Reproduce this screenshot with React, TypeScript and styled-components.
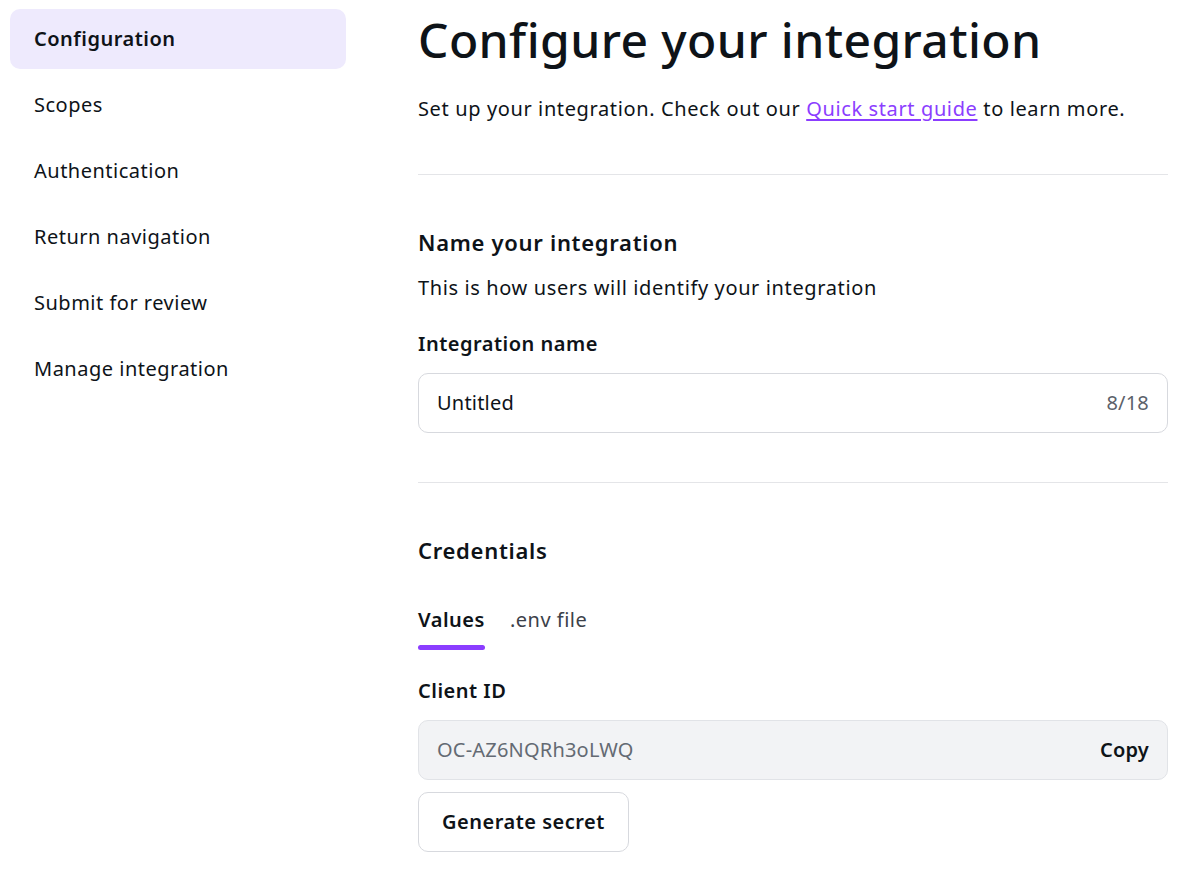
import React, { useState } from 'react';
import styled, { createGlobalStyle } from 'styled-components';

const GlobalStyle = createGlobalStyle`
  html, body {
    margin: 0;
    padding: 0;
    background: #fff;
  }
  body {
    font-family: 'Noto Sans', 'Open Sans', sans-serif;
    color: #0e1318;
    letter-spacing: 0.5px;
  }
  * {
    box-sizing: border-box;
  }
`;

const Page = styled.div`
  display: grid;
  grid-template-columns: 336px minmax(0, 750px);
  column-gap: 72px;
  padding: 9px 20px 0 10px;
  width: 1188px;
`;

const Sidebar = styled.nav`
  display: flex;
  flex-direction: column;
  gap: 6px;
`;

const NavItem = styled.a<{ $active?: boolean }>`
  display: flex;
  align-items: center;
  height: 60px;
  padding: 0 24px 2px;
  border-radius: 10px;
  font-size: 20px;
  font-weight: ${(p) => (p.$active ? 600 : 400)};
  color: #0e1318;
  text-decoration: none;
  background: ${(p) => (p.$active ? '#eeeafd' : 'transparent')};
  cursor: pointer;
`;

const Main = styled.main`
  display: flex;
  flex-direction: column;
  padding-top: 3px;
`;

const Title = styled.h1`
  margin: 0;
  font-size: 48px;
  line-height: 56px;
  font-weight: 500;
  letter-spacing: 0.4px;
`;

const Text = styled.p<{ $top: number }>`
  margin: ${(p) => p.$top}px 0 0;
  font-size: 20px;
  line-height: 28px;
  letter-spacing: 0.62px;
`;

const Link = styled.a`
  color: #8b3dff;
  text-decoration: underline;
  text-underline-offset: 3px;
`;

const Divider = styled.hr<{ $top: number }>`
  margin: ${(p) => p.$top}px 0 0;
  border: none;
  border-top: 1px solid #e4e5e8;
  height: 0;
`;

const Heading = styled.h2<{ $top: number }>`
  margin: ${(p) => p.$top}px 0 0;
  font-size: 22px;
  line-height: 30px;
  font-weight: 600;
  letter-spacing: 0.7px;
`;

const Label = styled.label<{ $top: number }>`
  display: block;
  margin-top: ${(p) => p.$top}px;
  font-size: 20px;
  line-height: 28px;
  font-weight: 600;
`;

const Field = styled.div<{ $readOnly?: boolean }>`
  display: flex;
  align-items: center;
  justify-content: space-between;
  margin-top: 15px;
  height: 60px;
  padding: 0 18px 2px 18px;
  border: 1px solid ${(p) => (p.$readOnly ? '#e1e3e7' : '#d7d9de')};
  border-radius: 10px;
  background: ${(p) => (p.$readOnly ? '#f2f3f5' : '#fff')};
  font-size: 20px;
  letter-spacing: 0.2px;
`;

const FieldValue = styled.span<{ $muted?: boolean }>`
  color: ${(p) => (p.$muted ? '#646a73' : '#0e1318')};
`;

const Counter = styled.span`
  color: #5b616a;
`;

const CopyButton = styled.button`
  border: none;
  background: none;
  padding: 0;
  font-family: inherit;
  font-size: 20px;
  font-weight: 600;
  letter-spacing: inherit;
  color: #0e1318;
  cursor: pointer;
`;

const Tabs = styled.div`
  display: flex;
  gap: 25px;
  margin-top: 41px;
`;

const Tab = styled.button<{ $active?: boolean }>`
  position: relative;
  border: none;
  background: none;
  padding: 0 0 16px;
  font-family: inherit;
  font-size: 20px;
  line-height: 28px;
  letter-spacing: inherit;
  font-weight: ${(p) => (p.$active ? 600 : 400)};
  color: ${(p) => (p.$active ? '#0e1318' : '#3c4149')};
  cursor: pointer;

  &::after {
    content: '';
    position: absolute;
    left: 0;
    right: 0;
    bottom: 0;
    height: 5px;
    border-radius: 3px;
    background: ${(p) => (p.$active ? '#8b3dff' : 'transparent')};
  }
`;

const SecondaryButton = styled.button`
  align-self: flex-start;
  margin-top: 12px;
  height: 60px;
  padding: 0 23px 2px;
  border: 1px solid #d7d9de;
  border-radius: 10px;
  background: #fff;
  font-family: inherit;
  font-size: 20px;
  font-weight: 600;
  letter-spacing: inherit;
  color: #0e1318;
  cursor: pointer;
`;

const NAV = [
  'Configuration',
  'Scopes',
  'Authentication',
  'Return navigation',
  'Submit for review',
  'Manage integration',
];

const App = () => {
  const [tab, setTab] = useState('values');
  const name = 'Untitled';

  return (
    <>
      <GlobalStyle />
      <Page>
        <Sidebar>
          {NAV.map((item, i) => (
            <NavItem key={item} $active={i === 0}>
              {item}
            </NavItem>
          ))}
        </Sidebar>
        <Main>
          <Title>Configure your integration</Title>
          <Text $top={27}>
            Set up your integration. Check out our <Link href="#">Quick start guide</Link> to
            learn more.
          </Text>
          <Divider $top={51} />
          <Heading $top={52}>Name your integration</Heading>
          <Text $top={17}>This is how users will identify your integration</Text>
          <Label $top={28}>Integration name</Label>
          <Field>
            <FieldValue>{name}</FieldValue>
            <Counter>{name.length}/18</Counter>
          </Field>
          <Divider $top={49} />
          <Heading $top={52}>Credentials</Heading>
          <Tabs>
            <Tab $active={tab === 'values'} onClick={() => setTab('values')}>
              Values
            </Tab>
            <Tab $active={tab === 'env'} onClick={() => setTab('env')}>
              .env file
            </Tab>
          </Tabs>
          <Label $top={27}>Client ID</Label>
          <Field $readOnly>
            <FieldValue $muted>OC-AZ6NQRh3oLWQ</FieldValue>
            <CopyButton>Copy</CopyButton>
          </Field>
          <SecondaryButton>Generate secret</SecondaryButton>
        </Main>
      </Page>
    </>
  );
};

export default App;
